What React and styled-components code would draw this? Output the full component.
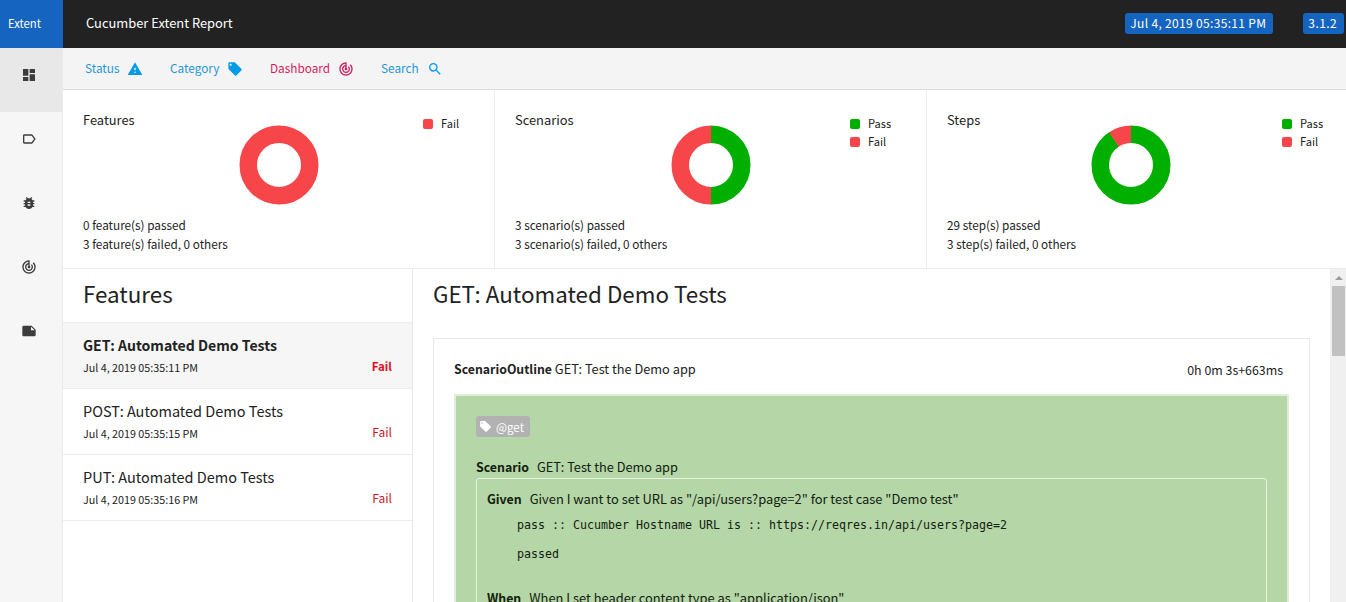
import React from "react";
import styled, { createGlobalStyle } from "styled-components";
import {
  MdDashboard, MdLabelOutline, MdBugReport, MdTrackChanges, MdNote,
  MdWarning, MdLocalOffer, MdSearch,
} from "react-icons/md";

const Global = createGlobalStyle`
  * { box-sizing: border-box; }
  body { margin: 0; overflow: hidden; background: #fff; color: #222; font-family: "Noto Sans CJK SC", "Open Sans", sans-serif; }
`;

const Page = styled.div`
  display: flex;
  flex-direction: column;
  width: 100%;
  height: 100vh;
  overflow: hidden;
  white-space: nowrap;
`;
const Header = styled.header`
  display: flex;
  align-items: center;
  flex: 0 0 48px;
  background: #222;
  color: #fff;
`;
const Logo = styled.div`
  width: 63px;
  height: 48px;
  padding-left: 8px;
  background: #1565c0;
  font-size: 11.25px;
  line-height: 47px;
`;
const ReportName = styled.div`
  margin-left: 23px;
  flex: 1;
  font-size: 12.9px;
  line-height: 46px;
  height: 48px;
`;
const HeaderLabel = styled.span`
  height: 21px;
  margin: 0 ${(p) => p.$after}px 1px 0;
  padding: 0 7px 0 5px;
  border-radius: 3px;
  background: #1565c0;
  font-size: 12px;
  line-height: 19px;
  letter-spacing: ${(p) => p.$spacing}px;
`;
const Body = styled.div`
  display: flex;
  flex: 1;
  min-height: 0;
`;
const Sidebar = styled.aside`
  width: 63px;
  flex: none;
  background: #f6f6f6;
  border-right: 1px solid #ebebeb;
`;
const SideItem = styled.div`
  display: flex;
  align-items: center;
  height: 64px;
  padding: 0 0 10px 21px;
  background: ${(p) => (p.$active ? "#e8e8e8" : "transparent")};
  color: #3c3c3c;
  font-size: 16px;
`;
const Content = styled.div`
  display: flex;
  flex-direction: column;
  flex: 1;
  min-width: 0;
`;
const Nav = styled.nav`
  display: flex;
  align-items: center;
  flex: 0 0 42px;
  padding-left: 22px;
  background: #f4f4f4;
  border-bottom: 1px solid #ddd;
`;
const NavItem = styled.div`
  display: flex;
  align-items: center;
  justify-content: space-between;
  width: ${(p) => p.$width}px;
  margin-right: ${(p) => p.$after}px;
  color: ${(p) => (p.$active ? "#d81b60" : "#1f97d4")};
  font-size: 11.8px;
  line-height: 40px;
  svg { font-size: 16px; color: ${(p) => (p.$active ? "#d0205c" : "#039be5")}; }
`;
const Caption = styled.span`
  margin-top: -2px;
`;
const Charts = styled.section`
  display: flex;
  flex: 0 0 179px;
  border-bottom: 1px solid #ececec;
`;
const Panel = styled.div`
  display: flex;
  flex-direction: column;
  width: 432px;
  flex: none;
  padding: 20px 0 0 20px;
  border-right: 1px solid #ececec;
`;
const PanelTop = styled.div`
  display: flex;
  align-items: flex-start;
  height: 105px;
`;
const PanelTitle = styled.div`
  width: ${(p) => p.$width}px;
  font-size: 12.9px;
  line-height: 20px;
`;
const DonutBox = styled.div`
  width: 80px;
  height: 80px;
  margin-top: 15px;
  svg { display: block; }
`;
const Legend = styled.div`
  flex: 1;
  display: flex;
  flex-direction: column;
  align-items: flex-start;
  padding: 5px 0 0 ${(p) => p.$left}px;
`;
const LegendItem = styled.div`
  display: flex;
  align-items: center;
  height: 18px;
  font-size: 11.1px;
  line-height: 18px;
  &::before {
    content: "";
    width: 10px;
    height: 10px;
    margin-right: 8px;
    border-radius: 2px;
    background: ${(p) => p.$color};
  }
`;
const Stat = styled.div`
  font-size: 11.75px;
  line-height: 19px;
  height: 19px;
`;
const Columns = styled.div`
  display: flex;
  flex: 1;
  min-height: 0;
`;
const FeatureList = styled.section`
  width: 350px;
  flex: none;
  border-right: 1px solid #e8e8e8;
`;
const Heading = styled.h2`
  margin: 0;
  height: ${(p) => p.$height}px;
  padding-left: ${(p) => p.$left || 0}px;
  font-size: 22.4px;
  font-weight: 400;
  line-height: 48px;
`;
const Feature = styled.div`
  display: flex;
  justify-content: space-between;
  height: 66px;
  padding: 12px 20px 0;
  border-top: 1px solid #ececec;
  background: ${(p) => (p.$active ? "#f6f6f6" : "#fff")};
`;
const FeatureName = styled.div`
  font-size: ${(p) => (p.$active ? 14.07 : 14.5)}px;
  font-weight: ${(p) => (p.$active ? 700 : 400)};
  line-height: 20px;
`;
const FeatureTime = styled.div`
  margin-top: 3px;
  font-size: 10.75px;
  line-height: 19px;
`;
const FeatureStatus = styled.div`
  margin-top: 21px;
  color: ${(p) => (p.$active ? "#e0101c" : "#cc1626")};
  font-size: ${(p) => (p.$active ? 11.5 : 12)}px;
  font-weight: ${(p) => (p.$active ? 700 : 400)};
  line-height: 20px;
`;
const ListEnd = styled.div`
  border-top: 1px solid #ececec;
`;
const Detail = styled.main`
  flex: 1;
  min-width: 0;
  padding: 0 20px;
  overflow: hidden;
`;
const Card = styled.div`
  height: 400px;
  padding: 20px 20px 0;
  border: 1px solid #e8e8e8;
`;
const CardTop = styled.div`
  display: flex;
  justify-content: space-between;
  height: 35px;
  padding-right: 6px;
  font-size: 12.75px;
  line-height: 20px;
  b { font-size: 12.3px; }
`;
const Duration = styled.span`
  font-size: 12.4px;
  line-height: 22px;
`;
const Passed = styled.div`
  height: 340px;
  padding: 20px 20px 0;
  border: 2px solid #dfeed7;
  background: #b5d6a7;
  color: #12200e;
`;
const Tag = styled.span`
  display: flex;
  align-items: center;
  width: 54px;
  height: 21px;
  padding-left: 3px;
  gap: 4px;
  border-radius: 3px;
  background: #b2b2b2;
  color: #fff;
  font-size: 11.6px;
  line-height: 20px;
  svg { font-size: 13px; }
`;
const Line = styled.div`
  display: flex;
  align-items: baseline;
  height: 20px;
  font-size: 12.88px;
  line-height: 20px;
  b { font-size: 12.35px; margin-right: 8px; }
`;
const ScenarioLine = styled(Line)`
  margin: 20px 0 1px;
  font-size: 12.75px;
`;
const NextStep = styled(Line)`
  margin-top: 24px;
`;
const Steps = styled.div`
  height: 240px;
  padding: 10px;
  border: 1px solid #e6f3df;
  border-radius: 3px;
`;
const Log = styled.pre`
  margin: 0 0 0 30px;
  padding-top: ${(p) => p.$top}px;
  font-family: "DejaVu Sans Mono", monospace;
  font-size: 11.63px;
  line-height: 20px;
`;
const Scrollbar = styled.div`
  width: 16px;
  flex: none;
  padding: 7px 1px 0 2px;
  background: #f0f0f0;
`;
const ScrollUp = styled.div`
  width: 0;
  height: 0;
  margin: 0 0 6px 3px;
  border: 4px solid transparent;
  border-top: 0;
  border-bottom-color: #9c9c9c;
`;
const Thumb = styled.div`
  height: 70px;
  background: #c1c1c1;
`;

const GREEN = "#00af00";
const RED = "#f7464a";
const MID_R = 30.75;
const CIRC = 2 * Math.PI * MID_R;

// Each share gets its own arc, starting at twelve o'clock.
function Donut({ pass }) {
  return (
    <DonutBox>
      <svg width="80" height="80" viewBox="0 0 80 80" fill="none" strokeWidth="17.5">
        {pass > 0 && (
          <circle cx="40" cy="40" r={MID_R} stroke={GREEN} transform="rotate(-90 40 40)"
            strokeDasharray={`${pass * CIRC} ${CIRC}`} />
        )}
        <circle cx="40" cy="40" r={MID_R} stroke={RED} transform={`rotate(${pass * 360 - 90} 40 40)`}
          strokeDasharray={`${(1 - pass) * CIRC} ${pass * CIRC}`} />
      </svg>
    </DonutBox>
  );
}

const panels = [
  { title: "Features", pass: 0, before: 156, left: 104, legend: ["Fail"], lines: ["0 feature(s) passed", "3 feature(s) failed, 0 others"] },
  { title: "Scenarios", pass: 0.5, before: 156, left: 99, legend: ["Pass", "Fail"], lines: ["3 scenario(s) passed", "3 scenario(s) failed, 0 others"] },
  { title: "Steps", pass: 29 / 32, before: 144, left: 111, legend: ["Pass", "Fail"], lines: ["29 step(s) passed", "3 step(s) failed, 0 others"] },
];

const features = [
  { name: "GET: Automated Demo Tests", time: "Jul 4, 2019 05:35:11 PM", active: true },
  { name: "POST: Automated Demo Tests", time: "Jul 4, 2019 05:35:15 PM" },
  { name: "PUT: Automated Demo Tests", time: "Jul 4, 2019 05:35:16 PM" },
];

export default function App() {
  return (
    <Page>
      <Global />
      <Header>
        <Logo>Extent</Logo>
        <ReportName>Cucumber Extent Report</ReportName>
        <HeaderLabel $after={30} $spacing={0.33}>Jul 4, 2019 05:35:11 PM</HeaderLabel>
        <HeaderLabel $after={2} $spacing={0.4}>3.1.2</HeaderLabel>
      </Header>
      <Body>
        <Sidebar>
          <SideItem $active><MdDashboard /></SideItem>
          <SideItem><MdLabelOutline /></SideItem>
          <SideItem><MdBugReport /></SideItem>
          <SideItem><MdTrackChanges /></SideItem>
          <SideItem><MdNote /></SideItem>
        </Sidebar>
        <Content>
          <Nav>
            <NavItem $width={58} $after={27}><Caption>Status</Caption><MdWarning /></NavItem>
            <NavItem $width={73} $after={27}><Caption>Category</Caption><MdLocalOffer /></NavItem>
            <NavItem $width={84} $after={27} $active><Caption>Dashboard</Caption><MdTrackChanges /></NavItem>
            <NavItem $width={62} $after={0}><Caption>Search</Caption><MdSearch /></NavItem>
          </Nav>
          <Charts>
            {panels.map((p) => (
              <Panel key={p.title}>
                <PanelTop>
                  <PanelTitle $width={p.before}>{p.title}</PanelTitle>
                  <Donut pass={p.pass} />
                  <Legend $left={p.left}>
                    {p.legend.map((l) => (
                      <LegendItem key={l} $color={l === "Pass" ? GREEN : RED}><Caption>{l}</Caption></LegendItem>
                    ))}
                  </Legend>
                </PanelTop>
                {p.lines.map((l) => <Stat key={l}>{l}</Stat>)}
              </Panel>
            ))}
          </Charts>
          <Columns>
            <FeatureList>
              <Heading $height={53} $left={20}>Features</Heading>
              {features.map((f) => (
                <Feature key={f.name} $active={f.active}>
                  <div>
                    <FeatureName $active={f.active}>{f.name}</FeatureName>
                    <FeatureTime>{f.time}</FeatureTime>
                  </div>
                  <FeatureStatus $active={f.active}>Fail</FeatureStatus>
                </Feature>
              ))}
              <ListEnd />
            </FeatureList>
            <Detail>
              <Heading $height={69}>GET: Automated Demo Tests</Heading>
              <Card>
                <CardTop>
                  <span><b>ScenarioOutline</b> GET: Test the Demo app</span>
                  <Duration>0h 0m 3s+663ms</Duration>
                </CardTop>
                <Passed>
                  <Tag><MdLocalOffer />@get</Tag>
                  <ScenarioLine><b>Scenario</b>GET: Test the Demo app</ScenarioLine>
                  <Steps>
                    <Line><b>Given</b>Given I want to set URL as "/api/users?page=2" for test case "Demo test"</Line>
                    <Log $top={6}>pass :: Cucumber Hostname URL is :: https://reqres.in/api/users?page=2</Log>
                    <Log $top={9}>passed</Log>
                    <NextStep><b>When</b>When I set header content type as "application/json"</NextStep>
                  </Steps>
                </Passed>
              </Card>
            </Detail>
            <Scrollbar>
              <ScrollUp />
              <Thumb />
            </Scrollbar>
          </Columns>
        </Content>
      </Body>
    </Page>
  );
}
